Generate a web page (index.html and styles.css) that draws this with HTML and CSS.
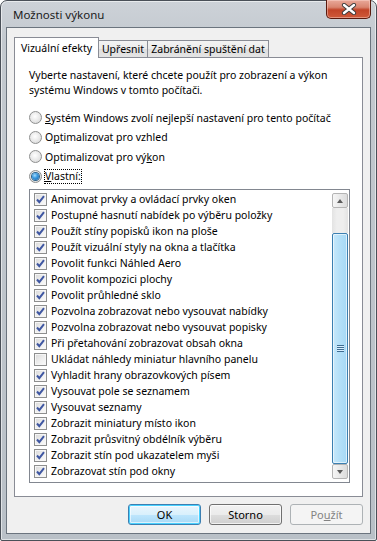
FILE: index.html
```html
<!DOCTYPE html>
<html lang="cs">

<head>
    <meta charset="UTF-8">
    <meta name="viewport" content="width=device-width, initial-scale=1.0">
    <title>Možnosti výkonu</title>
    <link rel="stylesheet" href="styles.css">
</head>

<body>
    <svg width="0" height="0" class="defs">
        <symbol id="tick" viewBox="0 0 13 13">
            <path d="M3 6.5 L5.3 9.2 L10 3.2" fill="none" stroke="#3f57a2" stroke-width="2" stroke-linejoin="miter" />
        </symbol>
    </svg>

    <div class="window">
        <div class="titlebar">
            <span class="title">Možnosti výkonu</span>
            <div class="close">
                <svg width="16" height="12" viewBox="0 0 16 12">
                    <path d="M3 2 L13 10 M13 2 L3 10" stroke="#3b3b3b" stroke-width="4.2" stroke-linecap="round" />
                    <path d="M3 2 L13 10 M13 2 L3 10" stroke="#ffffff" stroke-width="2.4" stroke-linecap="round" />
                </svg>
            </div>
        </div>

        <div class="client">
            <div class="tabs">
                <div class="tab active tab-visual">Vizuální efekty</div>
                <div class="tab tab-advanced">Upřesnit</div>
                <div class="tab tab-dep">Zabránění spuštění dat</div>
            </div>

            <div class="panel">
                <p class="intro">Vyberte nastavení, které chcete použít pro zobrazení a výkon<br>systému Windows v tomto počítači.</p>

                <div class="options">
                    <div class="option"><span class="radio"></span><span><u>S</u>ystém Windows zvolí nejlepší nastavení pro tento počítač</span></div>
                    <div class="option"><span class="radio"></span><span>O<u>p</u>timalizovat pro vzhled</span></div>
                    <div class="option"><span class="radio"></span><span>Optimalizovat pro vý<u>k</u>on</span></div>
                    <div class="option"><span class="radio checked"></span><span class="focus"><u>V</u>lastní:</span></div>
                </div>

                <div class="checklist">
                    <ul class="items">
                        <li><span class="check"><svg><use href="#tick" /></svg></span>Animovat prvky a ovládací prvky oken</li>
                        <li><span class="check"><svg><use href="#tick" /></svg></span>Postupné hasnutí nabídek po výběru položky</li>
                        <li><span class="check"><svg><use href="#tick" /></svg></span>Použít stíny popisků ikon na ploše</li>
                        <li><span class="check"><svg><use href="#tick" /></svg></span>Použít vizuální styly na okna a tlačítka</li>
                        <li><span class="check"><svg><use href="#tick" /></svg></span>Povolit funkci Náhled Aero</li>
                        <li><span class="check"><svg><use href="#tick" /></svg></span>Povolit kompozici plochy</li>
                        <li><span class="check"><svg><use href="#tick" /></svg></span>Povolit průhledné sklo</li>
                        <li><span class="check"><svg><use href="#tick" /></svg></span>Pozvolna zobrazovat nebo vysouvat nabídky</li>
                        <li><span class="check"><svg><use href="#tick" /></svg></span>Pozvolna zobrazovat nebo vysouvat popisky</li>
                        <li><span class="check"><svg><use href="#tick" /></svg></span>Při přetahování zobrazovat obsah okna</li>
                        <li><span class="check"></span>Ukládat náhledy miniatur hlavního panelu</li>
                        <li><span class="check"><svg><use href="#tick" /></svg></span>Vyhladit hrany obrazovkových písem</li>
                        <li><span class="check"><svg><use href="#tick" /></svg></span>Vysouvat pole se seznamem</li>
                        <li><span class="check"><svg><use href="#tick" /></svg></span>Vysouvat seznamy</li>
                        <li><span class="check"><svg><use href="#tick" /></svg></span>Zobrazit miniatury místo ikon</li>
                        <li><span class="check"><svg><use href="#tick" /></svg></span>Zobrazit průsvitný obdélník výběru</li>
                        <li><span class="check"><svg><use href="#tick" /></svg></span>Zobrazit stín pod ukazatelem myši</li>
                        <li><span class="check"><svg><use href="#tick" /></svg></span>Zobrazovat stín pod okny</li>
                    </ul>
                    <div class="scrollbar">
                        <div class="scroll-btn up"></div>
                        <div class="track"></div>
                        <div class="thumb"><span class="grip"></span></div>
                        <div class="scroll-btn down"></div>
                    </div>
                </div>
            </div>

            <div class="buttons">
                <button class="btn default">OK</button>
                <button class="btn">Storno</button>
                <button class="btn" disabled>Po<u>u</u>žít</button>
            </div>
        </div>
    </div>
</body>

</html>
```

FILE: styles.css
```css
body {
    margin: 0;
    font-family: 'Noto Sans', 'Open Sans', sans-serif;
    font-size: 10.5px;
    color: #000000;
}

.defs {
    position: absolute;
}

.window {
    box-sizing: border-box;
    width: 377px;
    height: 541px;
    display: flex;
    flex-direction: column;
    padding: 0 5px 6px 5px;
    border: 1px solid #4a5058;
    border-radius: 7px 7px 2px 2px;
    background: linear-gradient(to bottom, #cdd2d8 0, #c3c9cf 40px, #b9c0c7 100%);
    box-shadow: inset 0 0 0 1px rgba(255, 255, 255, 0.55);
}

.titlebar {
    height: 26px;
    display: flex;
    align-items: center;
    padding-left: 7px;
}

.title {
    font-size: 11.5px;
    color: #1b1b1b;
}

.close {
    margin-left: auto;
    align-self: flex-start;
    width: 45px;
    height: 19px;
    box-sizing: border-box;
    margin-top: -1px;
    border: 1px solid #5a1a0e;
    border-top: none;
    border-radius: 0 0 5px 5px;
    background: linear-gradient(to bottom, #e9a99a 0, #d98570 40%, #c24428 55%, #cf5a3a 100%);
    box-shadow: inset 0 0 0 1px rgba(255, 220, 210, 0.45);
    display: flex;
    align-items: center;
    justify-content: center;
}

.client {
    flex: 1;
    display: flex;
    flex-direction: column;
    background: #f0f0f0;
    border: 1px solid #6b747e;
    padding: 9px 7px 8px 7px;
}

.tabs {
    display: flex;
    align-items: flex-end;
    height: 21px;
    margin-bottom: -1px;
    position: relative;
    z-index: 1;
}

.tab {
    height: 17px;
    line-height: 16px;
    margin-bottom: 1px;
    text-align: center;
    border: 1px solid #898c95;
    border-bottom: none;
    border-left: none;
    background: linear-gradient(to bottom, #f3f3f3 0, #ebebeb 50%, #dedede 51%, #e4e4e4 100%);
    box-sizing: border-box;
}

.tab.active {
    height: 21px;
    line-height: 20px;
    margin-bottom: 0;
    border-left: 1px solid #898c95;
    background: #ffffff;
}

.tab-visual {
    width: 85px;
}

.tab-advanced {
    width: 49px;
}

.tab-dep {
    width: 121px;
}

.panel {
    flex: 1;
    display: flex;
    flex-direction: column;
    background: #ffffff;
    border: 1px solid #898c95;
    padding: 10px 12px 13px 14px;
}

.intro {
    margin: 0 0 10px 0;
    line-height: 15px;
}

.options {
    display: flex;
    flex-direction: column;
    margin-bottom: 3px;
}

.option {
    height: 19.5px;
    display: flex;
    align-items: center;
}

.radio {
    box-sizing: border-box;
    width: 13px;
    height: 13px;
    margin-right: 3px;
    border: 1px solid #8e8f8f;
    border-radius: 50%;
    background: radial-gradient(circle at 45% 40%, #ffffff 0, #f0f0f0 35%, #d4d4d4 100%);
    display: flex;
    align-items: center;
    justify-content: center;
}

.radio.checked::after {
    content: "";
    width: 7px;
    height: 7px;
    border-radius: 50%;
    background: radial-gradient(circle at 40% 35%, #a6dcff 0, #3d9ce0 40%, #135ea9 100%);
    box-shadow: 0 0 0 1px #2c628b;
}

.focus {
    outline: 1px dotted #000000;
    line-height: 13px;
}

.checklist {
    flex: 1;
    display: flex;
    border: 1px solid #828790;
    background: #ffffff;
}

.items {
    flex: 1;
    list-style: none;
    margin: 0;
    padding: 1px 0 0 4px;
}

.items li {
    height: 16px;
    display: flex;
    align-items: center;
}

.check {
    box-sizing: border-box;
    width: 13px;
    height: 13px;
    margin-right: 4px;
    border: 1px solid #8e8f8f;
    background: linear-gradient(135deg, #d9d9d9 0, #ededed 50%, #fbfbfb 100%);
    box-shadow: inset 0 0 0 1px #f6f6f6;
    position: relative;
}

.check svg {
    position: absolute;
    left: -1px;
    top: -1px;
    width: 13px;
    height: 13px;
}

.scrollbar {
    width: 16px;
    margin: 3px 1px 3px 0;
    display: flex;
    flex-direction: column;
}

.scroll-btn {
    box-sizing: border-box;
    height: 15px;
    border: 1px solid #b4b4b4;
    border-radius: 2px;
    background: linear-gradient(to right, #f6f6f6 0, #e9e9e9 50%, #dcdcdc 100%);
    display: flex;
    align-items: center;
    justify-content: center;
}

.scroll-btn::after {
    content: "";
    width: 0;
    height: 0;
    border-left: 3.5px solid transparent;
    border-right: 3.5px solid transparent;
}

.scroll-btn.up::after {
    border-bottom: 4px solid #5b5b5b;
}

.scroll-btn.down::after {
    border-top: 4px solid #5b5b5b;
}

.track {
    height: 25px;
    background: linear-gradient(to right, #e3e3e3 0, #eeeeee 30%, #eeeeee 70%, #e3e3e3 100%);
}

.thumb {
    flex: 1;
    box-sizing: border-box;
    border: 1px solid #3c7fb1;
    border-radius: 2px;
    background: linear-gradient(to right, #c7e8fb 0, #b3dff8 50%, #a6d8f5 100%);
    box-shadow: inset 0 0 0 1px rgba(255, 255, 255, 0.6);
    display: flex;
    align-items: center;
    justify-content: center;
}

.grip {
    width: 7px;
    height: 7px;
    background: repeating-linear-gradient(to bottom, #3f6d92 0, #3f6d92 1px, #d8efff 1px, #d8efff 2px);
}

.buttons {
    display: flex;
    justify-content: flex-end;
    gap: 8px;
    margin-top: 7px;
}

.btn {
    width: 73px;
    height: 21px;
    padding: 0;
    font-family: inherit;
    font-size: 11px;
    color: #000000;
    border: 1px solid #707070;
    border-radius: 3px;
    background: linear-gradient(to bottom, #f2f2f2 0, #ebebeb 50%, #dddddd 51%, #cfcfcf 100%);
    box-shadow: inset 0 0 0 1px rgba(255, 255, 255, 0.7);
}

.btn.default {
    border-color: #3c7fb1;
    box-shadow: inset 0 0 0 1px #48d1ff, inset 0 0 0 2px rgba(255, 255, 255, 0.6);
    background: linear-gradient(to bottom, #eaf6fd 0, #d9f0fc 50%, #bee6fd 51%, #a7d9f5 100%);
}

.btn:disabled {
    color: #838383;
    border-color: #adb2b5;
    background: #f4f4f4;
    box-shadow: none;
}
```
